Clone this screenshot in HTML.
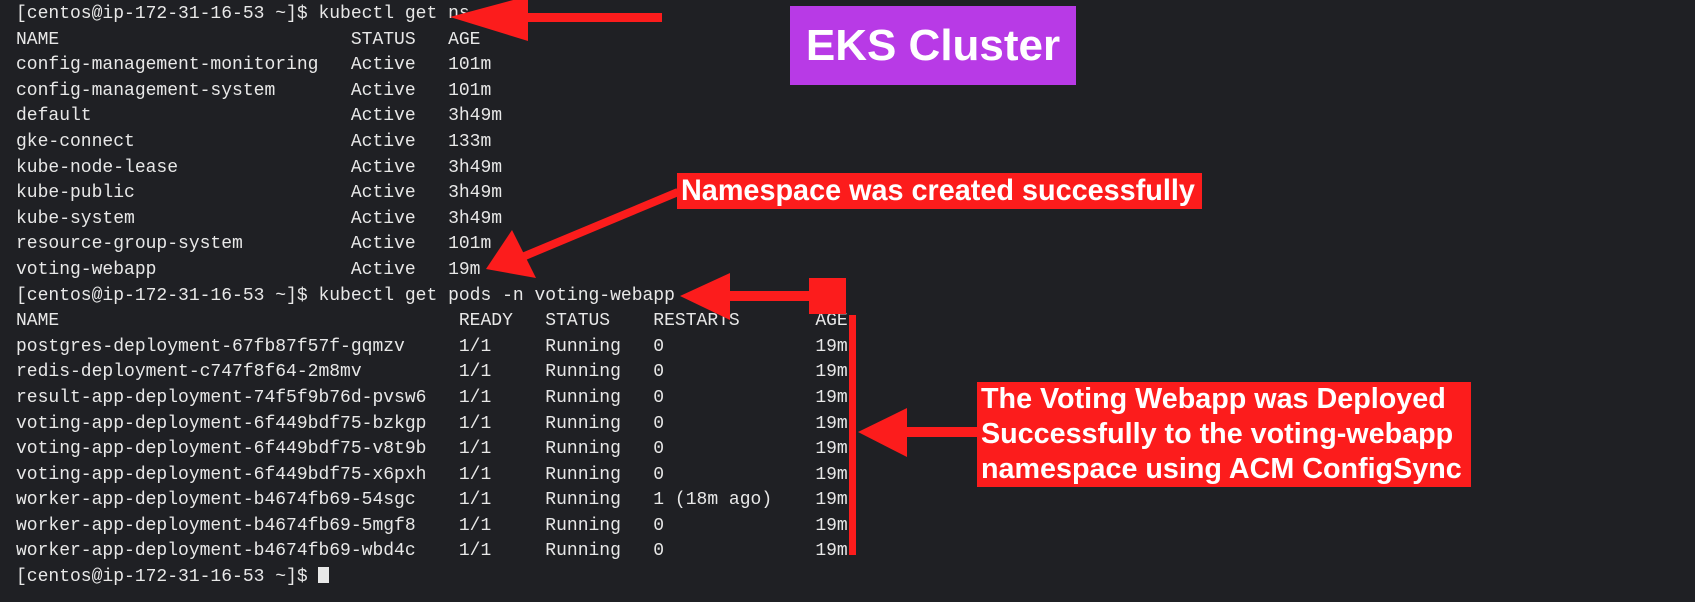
<!DOCTYPE html>
<html><head><meta charset="utf-8"><style>
html,body{margin:0;padding:0;background:#1f2024;width:1695px;height:602px;overflow:hidden;position:relative}
pre{position:absolute;left:16px;top:2px;margin:0;font-family:"Liberation Mono",monospace;font-size:18px;line-height:25.6px;color:#e8e8e8;letter-spacing:0}
.cur{display:inline-block;width:11px;height:16px;background:#e8e8e8;vertical-align:-2px}
.box{position:absolute;color:#fff;font-family:"Liberation Sans",sans-serif;font-weight:bold;white-space:nowrap;overflow:hidden}
.in{display:inline-block;transform-origin:0 50%}
</style></head><body>
<pre>[centos@ip-172-31-16-53 ~]$ kubectl get ns
NAME                           STATUS   AGE
config-management-monitoring   Active   101m
config-management-system       Active   101m
default                        Active   3h49m
gke-connect                    Active   133m
kube-node-lease                Active   3h49m
kube-public                    Active   3h49m
kube-system                    Active   3h49m
resource-group-system          Active   101m
voting-webapp                  Active   19m
[centos@ip-172-31-16-53 ~]$ kubectl get pods -n voting-webapp
NAME                                     READY   STATUS    RESTARTS       AGE
postgres-deployment-67fb87f57f-gqmzv     1/1     Running   0              19m
redis-deployment-c747f8f64-2m8mv         1/1     Running   0              19m
result-app-deployment-74f5f9b76d-pvsw6   1/1     Running   0              19m
voting-app-deployment-6f449bdf75-bzkgp   1/1     Running   0              19m
voting-app-deployment-6f449bdf75-v8t9b   1/1     Running   0              19m
voting-app-deployment-6f449bdf75-x6pxh   1/1     Running   0              19m
worker-app-deployment-b4674fb69-54sgc    1/1     Running   1 (18m ago)    19m
worker-app-deployment-b4674fb69-5mgf8    1/1     Running   0              19m
worker-app-deployment-b4674fb69-wbd4c    1/1     Running   0              19m
[centos@ip-172-31-16-53 ~]$ <span class="cur"></span></pre>

<div class="box" style="left:790px;top:6px;width:286px;height:79px;background:#b83ae6;font-size:44px;line-height:79px;text-align:center">EKS Cluster</div>
<div class="box" style="left:677px;top:173px;width:525px;height:36px;background:#fc1c1c;font-size:30px;line-height:36px;padding-left:4px;box-sizing:border-box"><span class="in" style="transform:scaleX(0.96)">Namespace was created successfully</span></div>
<div class="box" style="left:977px;top:382px;width:494px;height:105px;background:#fc1c1c;font-size:29px;line-height:35px;padding-left:4px;box-sizing:border-box"><span class="in" style="transform:scaleX(0.99)">The Voting Webapp was Deployed<br>Successfully to the voting-webapp<br>namespace using ACM ConfigSync</span></div>

<svg width="1695" height="602" style="position:absolute;left:0;top:0">
<g fill="#fc1c1c" stroke="none">
<rect x="520" y="13" width="142" height="9"/>
<polygon points="450,17 528,-4 528,41"/>
<line x1="678" y1="192" x2="520" y2="258" stroke="#fc1c1c" stroke-width="8"/>
<polygon points="486,269 512,230 536,278"/>
<rect x="809" y="278" width="37" height="36"/>
<rect x="720" y="291" width="90" height="10"/>
<polygon points="680,296 730,273 730,320"/>
<rect x="849" y="315" width="7" height="240"/>
<polygon points="858,432 907,408 907,457"/>
<rect x="900" y="427" width="77" height="10"/>
</g>
</svg>
</body></html>
